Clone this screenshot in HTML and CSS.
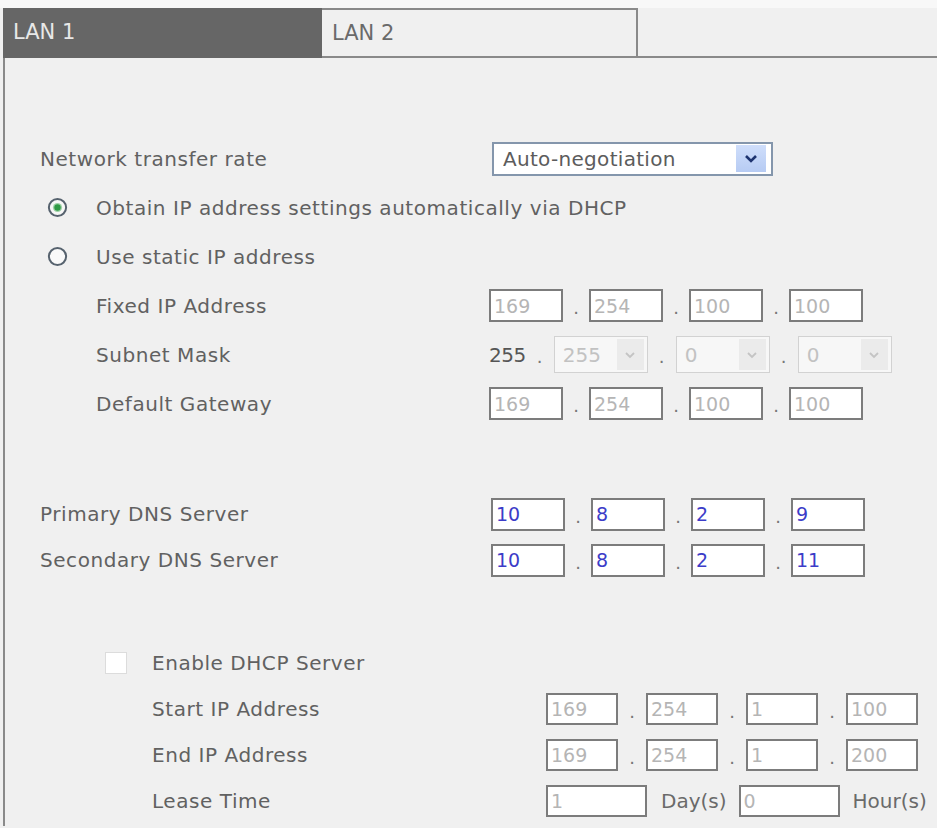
FILE: index.html
```html
<!DOCTYPE html>
<html>
<head>
<meta charset="utf-8">
<title>LAN Settings</title>
<link rel="stylesheet" href="styles.css">
</head>
<body>
<div class="page">
  <div class="top-space"></div>
  <div class="tabs">
    <div class="tab active">LAN 1</div>
    <div class="tab">LAN 2</div>
    <div class="tab-rest"></div>
  </div>
  <div class="panel">
    <div class="section lan">
      <div class="row">
        <div class="label">Network transfer rate</div>
        <div class="dropdown">
          <span class="dd-text">Auto-negotiation</span>
          <span class="dd-btn"><svg width="16" height="12" viewBox="0 0 16 12"><path d="M3 3 L8 8 L13 3" fill="none" stroke="#1e3470" stroke-width="2.6"/></svg></span>
        </div>
      </div>
      <div class="row radio-row">
        <span class="radio"><svg width="21" height="21" viewBox="0 0 21 21"><circle cx="10.5" cy="10.5" r="8.6" fill="#f7f7f7" stroke="#56626e" stroke-width="2"/><circle cx="10.5" cy="10.5" r="4.6" fill="#9fd2a8"/><circle cx="10.5" cy="10.5" r="3.2" fill="#2f9a45"/></svg></span>
        <span class="label">Obtain IP address settings automatically via DHCP</span>
      </div>
      <div class="row radio-row">
        <span class="radio"><svg width="21" height="21" viewBox="0 0 21 21"><circle cx="10.5" cy="10.5" r="8.6" fill="#f9f9f9" stroke="#56626e" stroke-width="2"/></svg></span>
        <span class="label">Use static IP address</span>
      </div>
      <div class="row">
        <div class="label indent">Fixed IP Address</div>
        <div class="ip">
          <input class="box off" type="text" value="169"><span class="dot">.</span>
          <input class="box off" type="text" value="254"><span class="dot">.</span>
          <input class="box off" type="text" value="100"><span class="dot">.</span>
          <input class="box off" type="text" value="100">
        </div>
      </div>
      <div class="row">
        <div class="label indent">Subnet Mask</div>
        <div class="mask">
          <span class="fixed">255</span><span class="dot">.</span>
          <div class="sel"><span class="sel-text">255</span><span class="sel-btn"><svg width="14" height="10" viewBox="0 0 14 10"><path d="M3 3 L7 7 L11 3" fill="none" stroke="#c4c4c4" stroke-width="1.8"/></svg></span></div><span class="dot">.</span>
          <div class="sel"><span class="sel-text">0</span><span class="sel-btn"><svg width="14" height="10" viewBox="0 0 14 10"><path d="M3 3 L7 7 L11 3" fill="none" stroke="#c4c4c4" stroke-width="1.8"/></svg></span></div><span class="dot">.</span>
          <div class="sel"><span class="sel-text">0</span><span class="sel-btn"><svg width="14" height="10" viewBox="0 0 14 10"><path d="M3 3 L7 7 L11 3" fill="none" stroke="#c4c4c4" stroke-width="1.8"/></svg></span></div>
        </div>
      </div>
      <div class="row">
        <div class="label indent">Default Gateway</div>
        <div class="ip">
          <input class="box off" type="text" value="169"><span class="dot">.</span>
          <input class="box off" type="text" value="254"><span class="dot">.</span>
          <input class="box off" type="text" value="100"><span class="dot">.</span>
          <input class="box off" type="text" value="100">
        </div>
      </div>
    </div>

    <div class="section dns">
      <div class="row">
        <div class="label">Primary DNS Server</div>
        <div class="ip">
          <input class="box on" type="text" value="10"><span class="dot">.</span>
          <input class="box on" type="text" value="8"><span class="dot">.</span>
          <input class="box on" type="text" value="2"><span class="dot">.</span>
          <input class="box on" type="text" value="9">
        </div>
      </div>
      <div class="row">
        <div class="label">Secondary DNS Server</div>
        <div class="ip">
          <input class="box on" type="text" value="10"><span class="dot">.</span>
          <input class="box on" type="text" value="8"><span class="dot">.</span>
          <input class="box on" type="text" value="2"><span class="dot">.</span>
          <input class="box on" type="text" value="11">
        </div>
      </div>
    </div>

    <div class="section dhcp">
      <div class="row check-row">
        <span class="checkbox"></span>
        <span class="label">Enable DHCP Server</span>
      </div>
      <div class="row">
        <div class="label">Start IP Address</div>
        <div class="ip small">
          <input class="box off" type="text" value="169"><span class="dot">.</span>
          <input class="box off" type="text" value="254"><span class="dot">.</span>
          <input class="box off" type="text" value="1"><span class="dot">.</span>
          <input class="box off" type="text" value="100">
        </div>
      </div>
      <div class="row">
        <div class="label">End IP Address</div>
        <div class="ip small">
          <input class="box off" type="text" value="169"><span class="dot">.</span>
          <input class="box off" type="text" value="254"><span class="dot">.</span>
          <input class="box off" type="text" value="1"><span class="dot">.</span>
          <input class="box off" type="text" value="200">
        </div>
      </div>
      <div class="row">
        <div class="label">Lease Time</div>
        <div class="lease">
          <input class="box off wide" type="text" value="1"><span class="unit">Day(s)</span>
          <input class="box off wide" type="text" value="0"><span class="unit">Hour(s)</span>
        </div>
      </div>
    </div>
  </div>
</div>
</body>
</html>
```

FILE: styles.css
```css
* { box-sizing: border-box; }

html, body {
  margin: 0;
  padding: 0;
  background: #f0f0f0;
}

body {
  font-family: "DejaVu Sans", "Liberation Sans", sans-serif;
  font-size: 20px;
  color: #616161;
  width: 937px;
  height: 828px;
  overflow: hidden;
}

.page {
  display: flex;
  flex-direction: column;
}

.top-space {
  height: 8px;
  background: #f8f8f8;
}

.tabs {
  display: flex;
  height: 50px;
}

.tab {
  display: flex;
  align-items: center;
  padding-left: 10px;
  font-size: 21px;
  letter-spacing: 0;
}

.tab.active {
  margin-left: 3px;
  width: 319px;
  background: #666666;
  color: #e8e8e8;
  border-bottom: 2px solid #666666;
}

.tab:not(.active) {
  width: 316px;
  background: #f0f0f0;
  color: #6a6a6a;
  border-top: 2px solid #8a8a8a;
  border-right: 2px solid #8a8a8a;
  border-bottom: 2px solid #8a8a8a;
}

.tab-rest {
  flex: 1;
  border-bottom: 2px solid #8a8a8a;
}

.panel {
  margin-left: 3px;
  border-left: 2px solid #8a8a8a;
  height: 768px;
  padding-top: 76px;
  display: flex;
  flex-direction: column;
}

.section {
  display: flex;
  flex-direction: column;
}

.row {
  display: flex;
  align-items: center;
}

.label {
  white-space: nowrap;
  letter-spacing: 0.55px;
}

.lan { padding-left: 35px; }
.lan .row { height: 49px; }
.lan .row > .label { width: 449px; }
.lan .row > .label.indent { padding-left: 56px; }

.dns { padding-left: 35px; margin-top: 63px; }
.dns .row { height: 46px; }
.dns .row > .label { width: 451px; }

.dhcp { margin-top: 57px; }
.dhcp .row { height: 46px; }
.dhcp .row > .label { width: 541px; padding-left: 147px; }

/* dropdown */
.dropdown {
  margin-left: 3px;
  width: 281px;
  height: 34px;
  border: 2px solid #8496ac;
  background: #ffffff;
  display: flex;
  align-items: center;
  justify-content: space-between;
  padding: 0 5px 0 9px;
}
.dd-text { color: #5c5c5c; letter-spacing: 0.3px; }
.dd-btn {
  width: 30px;
  height: 27px;
  background: linear-gradient(#cfdefb, #b6cbf3);
  display: flex;
  align-items: center;
  justify-content: center;
}

/* radio */
.radio-row { padding-left: 7px; }
.radio {
  width: 21px;
  height: 21px;
  display: flex;
  margin-right: 28px;
}

/* ip boxes */
.ip { display: flex; align-items: center; }
.box {
  width: 74px;
  height: 33px;
  border: 2px solid #7c7c7c;
  background: #ffffff;
  font-family: "DejaVu Sans", "Liberation Sans", sans-serif;
  font-size: 19px;
  padding: 0 0 0 3px;
  margin: 0;
  outline: none;
}
.box.off { color: #b5b5b5; }
.box.on { color: #3c3cc8; }
.ip.small .box { width: 72px; height: 32px; }
.dot {
  width: 26px;
  text-align: center;
  color: #777;
  font-size: 18px;
  padding-top: 4px;
}
.ip.small .dot { width: 28px; }

/* subnet mask */
.mask { display: flex; align-items: center; }
.fixed { color: #555; letter-spacing: -0.5px; }
.mask .dot { width: 28px; }
.sel {
  width: 94px;
  height: 37px;
  border: 1px solid #d2d2d2;
  background: #f7f7f7;
  display: flex;
  align-items: center;
  justify-content: space-between;
  padding: 0 3px 0 8px;
}
.sel-text { color: #c2c2c2; }
.sel-btn {
  width: 27px;
  height: 31px;
  background: #ebebeb;
  display: flex;
  align-items: center;
  justify-content: center;
}

/* checkbox */
.check-row { padding-left: 100px; }
.dhcp .check-row > .label { width: auto; padding-left: 0; }
.checkbox {
  width: 22px;
  height: 22px;
  background: #ffffff;
  border: 1px solid #dcdcdc;
  margin-right: 25px;
}

/* lease */
.lease { display: flex; align-items: center; }
.box.wide { width: 101px; height: 32px; }
.unit { margin: 0 12px 0 14px; color: #6a6a6a; }
.unit:last-child { margin-right: 0; margin-left: 13px; }
```
